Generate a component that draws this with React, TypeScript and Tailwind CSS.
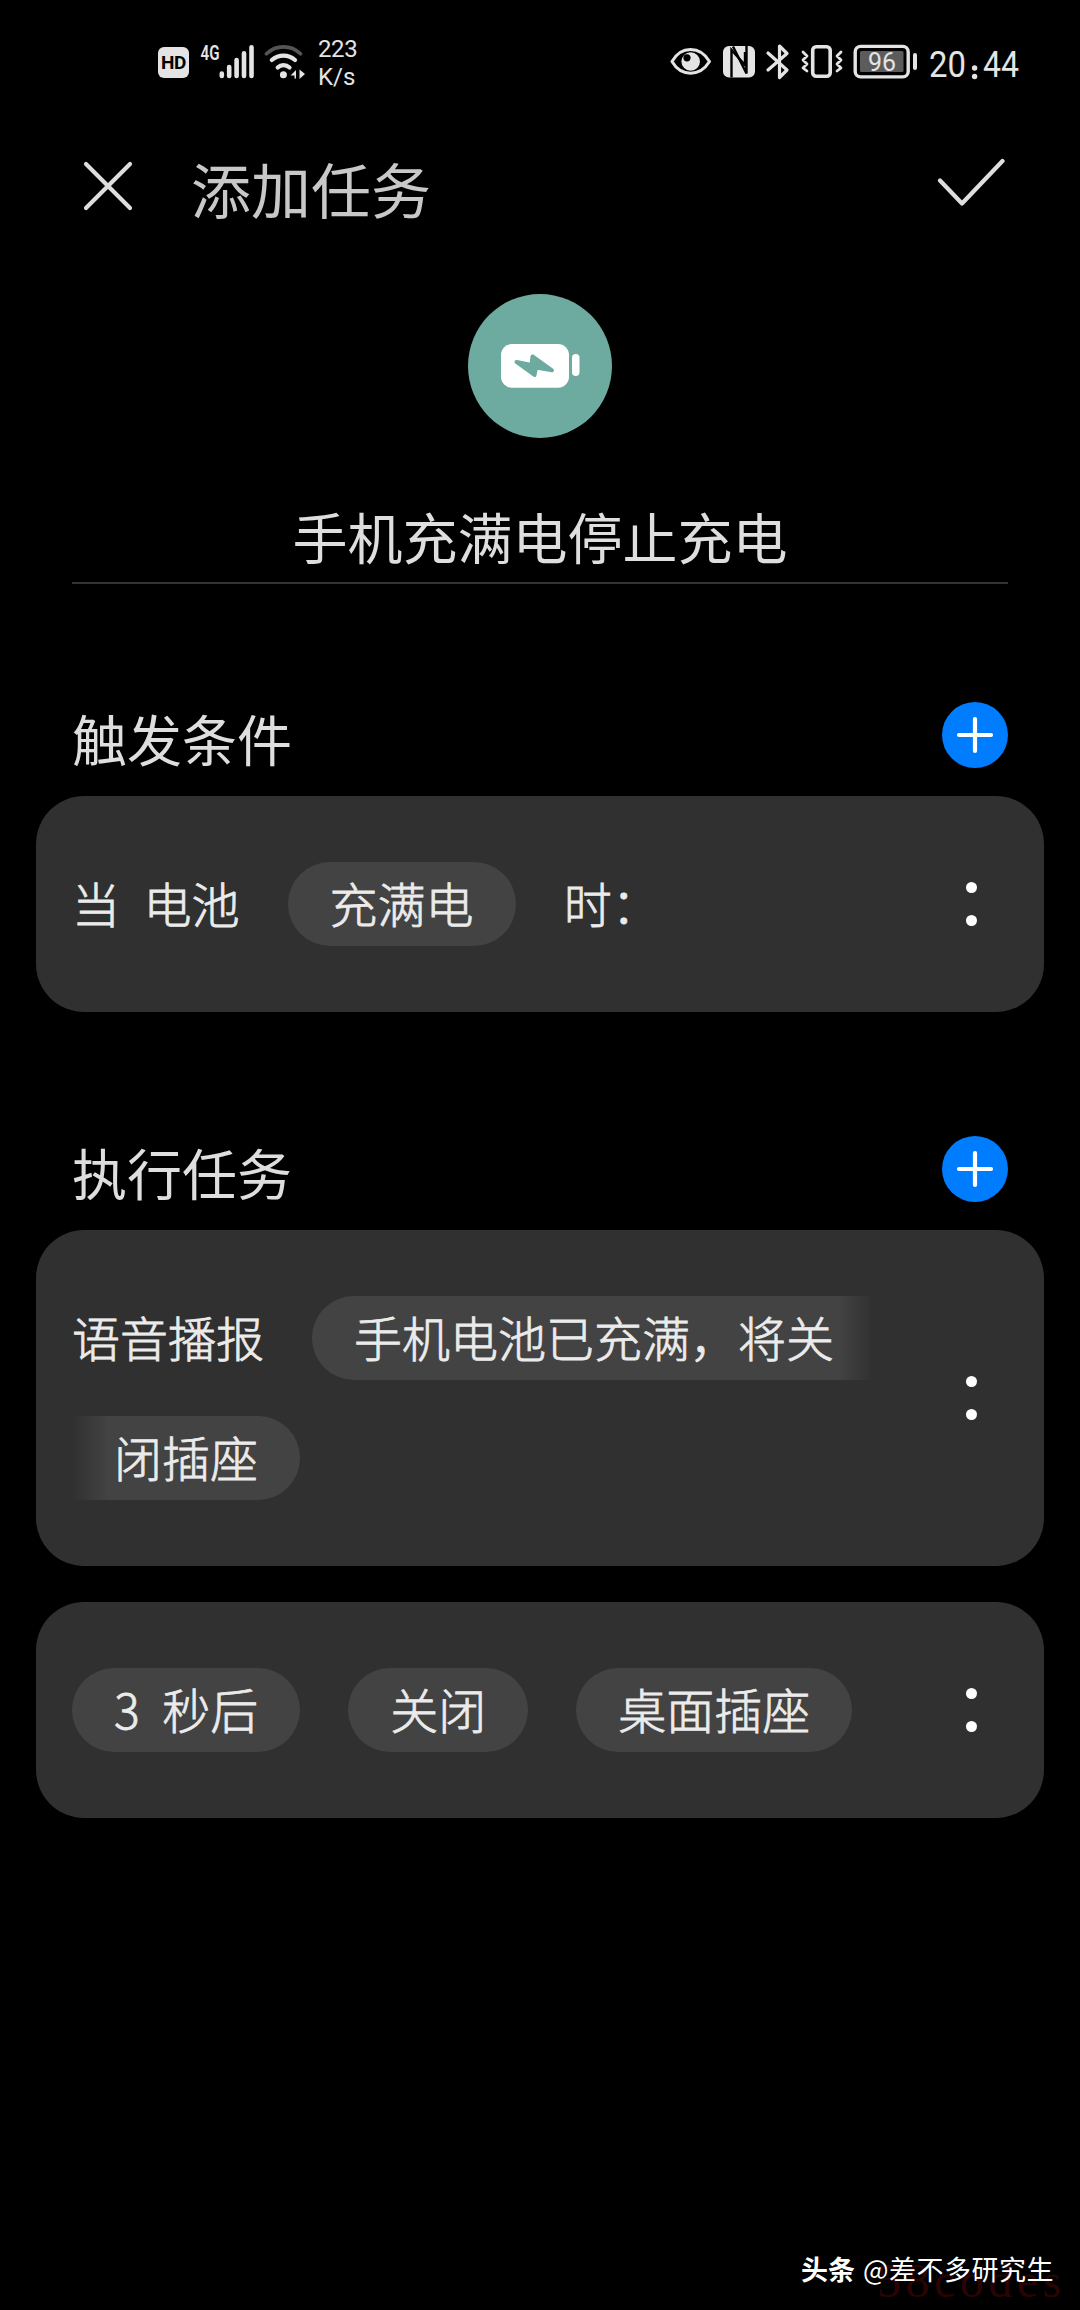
import React from "react";

type Part = { text: string; chip?: boolean };

const triggerParts: Part[] = [
  { text: "当 电池" },
  { text: "充满电", chip: true },
  { text: "时：" },
];

const delayChips = ["3 秒后", "关闭", "桌面插座"];

const StatusBar: React.FC = () => (
  <div className="flex h-[120px] items-start justify-between pl-[158px] pr-[61px] text-[#e4e4e4]">
    <div className="flex pt-[38px]">
      <div className="mt-[9px] flex h-[31px] w-[31px] items-center justify-center rounded-[6px] bg-[#e4e4e4] font-[Roboto] text-[19px] font-bold leading-none tracking-[-0.5px] text-black">
        HD
      </div>
      <svg className="ml-[11px] mt-[6px] overflow-visible" width="54" height="36" viewBox="200 44 54 36">
        <text x="200.5" y="59.5" fill="#e4e4e4" fontFamily="Roboto" fontSize="20" fontWeight="600" textLength="19" lengthAdjust="spacingAndGlyphs">
          4G
        </text>
        <path
          d="M221.8 73.5v2.5M229.2 67v9M236.6 60v16M244 53.3v22.7M251.5 47.3v28.7"
          stroke="#e4e4e4"
          strokeWidth="4.6"
          strokeLinecap="round"
        />
      </svg>
      {/* wifi */}
      <svg className="ml-[10px] mt-[6px]" width="42" height="36" viewBox="264 44 42 36" fill="none" strokeLinecap="round">
        <path d="M266.5 53.8C276 44.5 291 44.5 300.5 53.8" stroke="#555" strokeWidth="3.6" />
        <path d="M271.8 60C278.5 54.2 288.5 54.2 295 60" stroke="#e4e4e4" strokeWidth="4.2" />
        <path d="M277.7 67.5C281 64.3 286 64.3 289.5 67.5" stroke="#e4e4e4" strokeWidth="4.2" />
        <circle cx="283.4" cy="74.8" r="3.5" fill="#e4e4e4" />
        <path d="M290.5 75.5l5.5-5.5v8.500h-1.500v-3zM299.5 69.500l5.500 4.500-5.500 5z" fill="#e4e4e4" />
      </svg>
      <div className="ml-[12px] mt-[-3px] font-[Roboto] text-[24px] leading-[28px]">
        <div className="tracking-[-0.4px]">223</div>
        <div>K/s</div>
      </div>
    </div>

    <div className="flex pt-[44px]">
      <svg className="overflow-visible" width="248" height="36" viewBox="670 44 248 36" fill="none" stroke="#e4e4e4">
        {/* eye */}
        <path d="M672 61.5C681 45.5 700 45.5 709.5 61.5C700 77 681 77 672 61.5Z" strokeWidth="3" strokeLinejoin="round" />
        <circle cx="690.7" cy="61.5" r="9.3" fill="#e4e4e4" stroke="none" />
        <circle cx="687" cy="57.8" r="3.6" fill="#000" stroke="none" />
        {/* nfc */}
        <rect x="723" y="46" width="32" height="31.5" rx="6" fill="#e4e4e4" stroke="none" />
        <path d="M731.5 77.5V50L745 65V52" stroke="#000" strokeWidth="2.4" />
        <path d="M733 46.5L746.5 73.5V46" stroke="#000" strokeWidth="2.4" />
        {/* bluetooth */}
        <path d="M768 53L787 70L779.5 77.5V46L787 53.5L768 70" strokeWidth="3.2" strokeLinejoin="round" strokeLinecap="round" />
        {/* vibrate */}
        <rect x="812.7" y="46.7" width="17.5" height="29.5" rx="3.5" strokeWidth="3.6" />
        <path d="M803 52l4 4-4 4 4 4-4 4 4 3M841 52l-4 4 4 4-4 4 4 4-4 3" strokeWidth="2.8" strokeLinejoin="round" strokeLinecap="round" />
        {/* battery */}
        <rect x="855.2" y="46.4" width="53" height="30.5" rx="5.5" strokeWidth="3.4" />
        <rect x="860" y="51" width="43.5" height="21" rx="1.5" fill="#5c5c5c" stroke="none" />
        <path d="M915 55v13" strokeWidth="4" strokeLinecap="round" />
        <text x="868" y="71" fill="#e4e4e4" stroke="none" fontFamily="Roboto" fontSize="26" textLength="28" lengthAdjust="spacingAndGlyphs">
          96
        </text>
      </svg>
      <svg className="ml-[11px] overflow-visible" width="90" height="36" viewBox="929 44 90 36" fill="#e4e4e4" fontFamily="Roboto" fontSize="36">
        <text x="929" y="76.5" textLength="37" lengthAdjust="spacingAndGlyphs">20</text>
        <circle cx="974.6" cy="68" r="2.7" />
        <circle cx="974.6" cy="76.5" r="2.7" />
        <text x="983" y="76.5" textLength="36" lengthAdjust="spacingAndGlyphs">44</text>
      </svg>
    </div>
  </div>
);

const SectionHeader: React.FC<{ title: string }> = ({ title }) => (
  <div className="flex h-[66px] items-center justify-between px-9">
    <h2 className="pt-1 text-[55px] leading-[66px]">{title}</h2>
    <svg width="66" height="66" viewBox="0 0 66 66">
      <circle cx="33" cy="33" r="33" fill="#007dff" />
      <path d="M33 17v32M17 33h32" stroke="#fff" strokeWidth="4.2" strokeLinecap="round" />
    </svg>
  </div>
);

const Chip: React.FC<{ children: React.ReactNode }> = ({ children }) => (
  <span className="block h-[84px] whitespace-pre rounded-full bg-[#434343] px-[42px]">
    {children}
  </span>
);

const Card: React.FC<{ children: React.ReactNode }> = ({ children }) => (
  <div className="flex items-center justify-between rounded-[48px] bg-[#303030] py-[66px] pl-9 pr-[67px] text-[48px] font-light leading-[81px] text-[#ebebeb] [-webkit-text-stroke:0.8px_#ebebeb]">
    {children}
    <div className="flex flex-col gap-[22px]">
      <i className="h-[11px] w-[11px] rounded-full bg-white" />
      <i className="h-[11px] w-[11px] rounded-full bg-white" />
    </div>
  </div>
);

export default function App() {
  return (
    <div className="relative h-[2310px] w-[1080px] overflow-hidden bg-black font-['Noto_Sans_CJK_SC',sans-serif] text-[#dedede]">
      <StatusBar />

      <header className="flex h-[132px] items-center pl-[82px] pr-[75px]">
        <svg width="52" height="52" viewBox="0 0 52 52" stroke="#dedede" strokeWidth="4.2" strokeLinecap="round">
          <path d="M4 4L48 48M48 4L4 48" />
        </svg>
        <h1 className="ml-[57px] flex-1 pt-1 text-[60px] leading-[80px] text-[#c8c8c8]">添加任务</h1>
        <svg className="mb-[8px]" width="68" height="48" viewBox="0 0 68 48" fill="none" stroke="#dedede" strokeWidth="4.2" strokeLinecap="round" strokeLinejoin="round">
          <path d="M3 22.5L25 45.5L65.5 3" />
        </svg>
      </header>

      <div className="mt-[42px] flex justify-center">
        <svg width="144" height="144" viewBox="468 294 144 144">
          <circle cx="540" cy="366" r="72" fill="#6daaa0" />
          <rect x="501" y="344" width="68" height="43.7" rx="11" fill="#fff" />
          <rect x="572" y="354" width="7.5" height="22" rx="3.7" fill="#fff" />
          <path d="M516.5 362L531.5 365L532.500 356.500L552 370.300L536 367.500L534.500 375Z" fill="#6daaa0" stroke="#6daaa0" strokeWidth="4" strokeLinejoin="round" />
        </svg>
      </div>

      <div className="mx-[72px] mt-[52px] h-[94px] border-b-2 border-[#333] text-center text-[55px] leading-[90px]">
        手机充满电停止充电
      </div>

      <section className="mx-9 mt-[118px]">
        <SectionHeader title="触发条件" />
        <div className="mt-[28px]">
          <Card>
            <div className="flex h-[84px] gap-12">
              {triggerParts.map((part) =>
                part.chip ? (
                  <Chip key={part.text}>{part.text}</Chip>
                ) : (
                  <span key={part.text} className="whitespace-pre [word-spacing:13px]">
                    {part.text}
                  </span>
                )
              )}
            </div>
          </Card>
        </div>
      </section>

      <section className="mx-9 mt-[124px]">
        <SectionHeader title="执行任务" />
        <div className="mt-[28px] flex flex-col gap-9">
          <Card>
            <div className="flex flex-col gap-9">
              <div className="flex gap-12">
                <span>语音播报</span>
                <span className="h-[84px] rounded-l-full bg-gradient-to-r from-[#434343] from-[526px] to-[#323232] pl-[42px] pr-9">
                  手机电池已充满，将关
                </span>
              </div>
              <span className="h-[84px] w-[228px] rounded-r-full bg-gradient-to-r from-[#303030] to-[#434343] to-[36px] pl-[42px]">
                闭插座
              </span>
            </div>
          </Card>
          <Card>
            <div className="flex gap-12 [word-spacing:12px]">
              {delayChips.map((label) => (
                <Chip key={label}>{label}</Chip>
              ))}
            </div>
          </Card>
        </div>
      </section>

      {/* watermarks */}
      <div className="absolute left-[877px] top-[2254px] font-['Liberation_Serif',serif] text-[48px] leading-[54px] tracking-[4.5px] text-[#2a0405]">
        58codes
      </div>
      <div className="absolute left-[801px] top-[2249px] flex gap-[8px] text-[27px] leading-[40px] text-white">
        <b>头条</b>
        <span className="tracking-[0.5px]">@差不多研究生</span>
      </div>
    </div>
  );
}
